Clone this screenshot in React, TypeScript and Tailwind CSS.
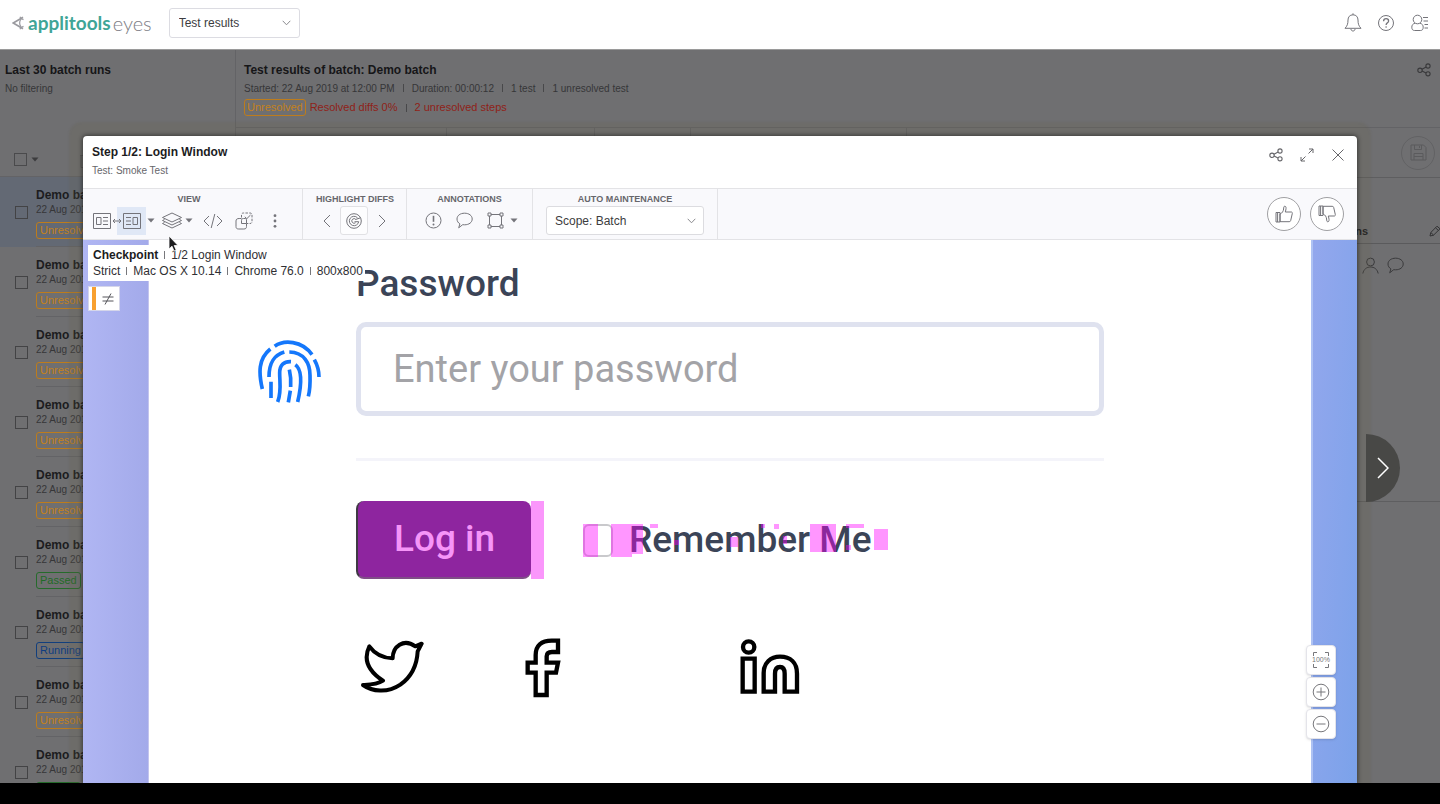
import type { ReactNode } from 'react'

type Status = 'Unresolved' | 'Passed' | 'Running'

const runs: Status[] = [
  'Unresolved',
  'Unresolved',
  'Unresolved',
  'Unresolved',
  'Unresolved',
  'Passed',
  'Running',
  'Unresolved',
  'Passed',
]

const statusStyle: Record<Status, string> = {
  Unresolved: 'border-[#bd7c1c] text-[#c4811c]',
  Passed: 'border-[#256b2b] text-[#1f6b27]',
  Running: 'border-[#123f7d] text-[#0f3d80]',
}

type IconProps = { w: number; h: number; className?: string; children: ReactNode; sw?: number; box?: string }

function Icon({ w, h, className = '', children, sw = 1, box }: IconProps) {
  return (
    <svg
      width={w}
      height={h}
      viewBox={box ?? `0 0 ${w} ${h}`}
      fill="none"
      stroke="currentColor"
      strokeWidth={sw}
      className={`block shrink-0 ${className}`}
      aria-hidden="true"
    >
      {children}
    </svg>
  )
}

const Caret = () => (
  <Icon w={8} h={5}>
    <path d="M.5 .5h7L4 4.5z" fill="currentColor" stroke="none" />
  </Icon>
)

const ChevronDown = ({ className = '' }: { className?: string }) => (
  <Icon w={9} h={6} className={className}>
    <path d="M.7 .8 4.5 4.8 8.3 .8" />
  </Icon>
)

const ShareIcon = () => (
  <Icon w={14} h={14} sw={1.1}>
    <circle cx="3" cy="7.3" r="2.2" />
    <circle cx="11" cy="3" r="2.1" />
    <circle cx="11" cy="10.8" r="2.1" />
    <path d="M5 6.2 9.1 4M5.1 8.1l3.9 1.8" />
  </Icon>
)

const BubbleIcon = () => (
  <Icon w={17} h={17}>
    <path d="M8.600 1.200C4.200 1.200 1 3.600 1 7c0 2.200 1.200 3.900 2.900 4.900L2.700 15.800l4-3.100c.6.1 1.200.1 1.900.1 4.400 0 7.600-2.400 7.600-5.800S13 1.200 8.600 1.200z" />
  </Icon>
)

const ThumbIcon = ({ down = false }: { down?: boolean }) => (
  <Icon w={18} h={18} className={down ? '-scale-y-100' : ''}>
    <path d="M1 7.500h4v9.500H1zM2.600 7.500V17M5 9c2.300-.8 3.400-3 3.600-5 .1-1.600.2-2.800 1.200-2.800 1.300 0 1.500 1.800 1 3.800L10.300 7h6c.8 0 1.200.7 1 1.500l-1.600 7c-.2.800-.7 1.200-1.500 1.200H5z" />
  </Icon>
)

function AppHeader() {
  return (
    <header className="flex h-[50px] shrink-0 items-center border-b border-[#9a9a9a] bg-white pr-[11px] pb-1 pl-3">
      <a href="#home" className="flex items-center font-['Lato',sans-serif] leading-6" aria-label="Applitools Eyes">
        <Icon w={13} h={14} sw={1.5} className="mr-[3px] text-[#9b9ba0]">
          <path d="M11 1.200 1.200 7 11 12.800" strokeWidth="1.800" />
          <path d="M8 .8 9 3C7.500 5.200 7.500 8.800 9 11L8 13.200M11.500 3.600 9.600 2.800M11.500 10.400l-1.900.8" strokeWidth="1.200" />
        </Icon>
        <span className="text-[19px] font-bold text-[#3fa597]">applitools</span>
        <span className="ml-0.5 text-[20px] font-light text-[#7d7d84]">eyes</span>
      </a>
      <div className="relative ml-[17px] w-[131px]">
        <select
          aria-label="Page"
          className="h-[30px] w-full appearance-none rounded-[3px] border border-[#dcdce2] bg-white px-[9px] text-xs text-[#3c3c40]"
        >
          <option>Test results</option>
        </select>
        <ChevronDown className="pointer-events-none absolute top-3 right-[9px] text-[#8a8a8e]" />
      </div>
      <nav className="ml-auto flex items-center gap-[15px] text-[#74747a]">
        <button type="button" aria-label="Notifications">
          <Icon w={18} h={19}>
            <path d="M9 1.800c-3.300 0-5 2.300-5 5.200 0 4-.8 6-3 8.300h16c-2.200-2.300-3-4.300-3-8.300 0-2.900-1.700-5.200-5-5.200zM9 .3v1.500M6.900 16c.3 1.400 1 2 2.100 2s1.800-.6 2.100-2" />
          </Icon>
        </button>
        <button type="button" aria-label="Help">
          <Icon w={18} h={18}>
            <circle cx="9" cy="9" r="7.500" />
            <path d="M6.600 7.200c0-1.600 1-2.500 2.500-2.500s2.500.9 2.500 2.200c0 1.900-2.500 2-2.500 4.200" strokeWidth="1.300" />
            <circle cx="9.100" cy="13" r=".8" fill="currentColor" stroke="none" />
          </Icon>
        </button>
        <button type="button" aria-label="Account">
          <Icon w={19} h={18}>
            <circle cx="7.500" cy="5.500" r="4.300" />
            <path d="M5 9.200c-2.200.6-3.200 2-3.200 4 0 2.300 1 3.300 2.800 3.300h5.800c1.800 0 2.800-1 2.800-3.300 0-2-1-3.400-3.200-4M13 3.500h5M13.500 7h4.500M14.500 10.500h3.500M14.500 14h3.500" />
          </Icon>
        </button>
      </nav>
    </header>
  )
}

function Sidebar() {
  return (
    <aside className="flex w-[236px] shrink-0 flex-col border-r border-[#636366]">
      <div className="h-[77px] px-[5px] pt-[11px]">
        <h2 className="text-xs leading-[18px] font-bold text-[#161618]">Last 30 batch runs</h2>
        <p className="text-[10px] leading-5 text-[#363638]">No filtering</p>
      </div>
      <div className="flex h-[50px] items-center border-b border-[#636366] pt-4 pl-[14px] text-[#3c3c3e]">
        <input
          type="checkbox"
          aria-label="Select all batches"
          className="size-[13px] appearance-none border border-[#4a4a4c]"
        />
        <button type="button" aria-label="Selection options" className="ml-1">
          <Caret />
        </button>
        <button type="button" aria-label="Delete batches" className="ml-10 text-[#59595b]">
          <Icon w={14} h={16}>
            <path d="M1 3.500h12M2 3.500v12h10v-12M5 3.500v-2h4v2" />
          </Icon>
        </button>
      </div>
      <ul className="min-h-0 flex-1 overflow-hidden">
        {runs.map((status, i) => (
          <li key={i} className={i === 0 ? 'flex h-[70px] bg-[#636974] pl-[15px]' : 'flex h-[70px] pl-[15px]'}>
            <input
              type="checkbox"
              aria-label={`Select run ${i + 1}`}
              className="mt-[29px] size-[13px] shrink-0 appearance-none border border-[#434345]"
            />
            <div className="ml-2 flex-1 overflow-hidden border-b border-[#636366] pt-2.5 whitespace-nowrap">
              <p className="text-xs leading-4 font-bold text-[#1c1c1e]">Demo batch</p>
              <p className="text-[10px] leading-[14px] text-[#363638]">22 Aug 2019 at 12:00 PM</p>
              <p className="mt-[5px] flex text-[11px] leading-[15px]">
                <span className={`rounded-[3px] border px-[3px] ${statusStyle[status]}`}>{status}</span>
                <span className="ml-1 pt-px text-[#8f2218]">Resolved diffs 0%</span>
              </p>
            </div>
          </li>
        ))}
      </ul>
    </aside>
  )
}

const Bar = () => <span className="mx-2 inline-block h-2 w-px bg-[#48484a]" />

function BatchDetails() {
  return (
    <section className="flex min-w-0 flex-1 flex-col">
      <div className="flex h-[78px] justify-between border-b border-[#636366] pt-[11px] pr-[9px] pl-2">
        <div>
          <h1 className="text-xs leading-[18px] font-bold text-[#161618]">Test results of batch: Demo batch</h1>
          <p className="text-[10px] leading-5 text-[#363638]">
            Started: 22 Aug 2019 at 12:00 PM
            <Bar />
            Duration: 00:00:12
            <Bar />1 test
            <Bar />1 unresolved test
          </p>
          <p className="flex items-center text-[11px] leading-[15px] text-[#8f2218]">
            <span className="mr-1 rounded-[3px] border border-[#bd7c1c] px-0.5 text-[#c4811c]">Unresolved</span>
            Resolved diffs 0%
            <Bar />2 unresolved steps
          </p>
        </div>
        <button type="button" aria-label="Share batch" className="self-start pt-0.5 text-[#39393b]">
          <ShareIcon />
        </button>
      </div>
      <div className="flex h-[50px] items-center border-b border-[#5e5e60] text-[#5b5b5d]">
        <div className="h-full w-[211px] border-r border-[#636366]" />
        <div className="h-full w-[148px] border-r border-[#636366]" />
        <div className="h-full w-24 border-r border-[#636366]" />
        <div className="h-full w-[216px] border-r border-[#636366]" />
        <button
          type="button"
          aria-label="Save"
          className="mr-[5px] ml-auto flex size-[34px] items-center justify-center rounded-full border border-[#626264]"
        >
          <Icon w={17} h={17}>
            <path d="M1 1h12.500L16 3.500V16H1zM4.500 1v4.500h7V1M9.500 2v2M4 16V9.500h9V16M4 12.500h9" />
          </Icon>
        </button>
      </div>
      <div className="flex h-[66px] items-end justify-end border-b border-[#5a5a5c] pb-1">
        <span className="mr-[61px] text-[11px] leading-4 font-bold text-[#1c1c1e]">ns</span>
        <button type="button" aria-label="Edit" className="pb-0.5 text-[#333335]">
          <Icon w={11} h={13}>
            <path d="M1 12l.8-3.500L8 2.200l3 2.600-6.500 6.400zM2 8.700l2.600 2.400M6.500 3.800l3 2.700" />
          </Icon>
        </button>
      </div>
      <div className="flex h-[258px] items-start justify-end gap-2 border-b border-[#5e5e60] pt-[13px] pr-9 text-[#3a3a3c]">
        <button type="button" aria-label="Assign">
          <Icon w={17} h={17}>
            <circle cx="8.500" cy="5" r="3.900" />
            <path d="M.8 16.500c1-4.500 4-6.500 7.700-6.500s6.700 2 7.700 6.500" />
          </Icon>
        </button>
        <button type="button" aria-label="Comments">
          <BubbleIcon />
        </button>
      </div>
    </section>
  )
}

function ToolGroup({ title, className, children }: { title: string; className: string; children: ReactNode }) {
  return (
    <div role="group" aria-label={title} className={`border-r border-[#e3e3e6] pt-1 ${className}`}>
      <p className="text-center text-[9px] leading-[13px] font-bold whitespace-nowrap text-[#66666b] uppercase">{title}</p>
      <div className="flex h-[29px] items-center">{children}</div>
    </div>
  )
}

function Toolbar() {
  return (
    <div className="flex h-[52px] shrink-0 border-y border-[#e3e3e6] bg-[#f9f9fc] text-[#74747a]">
      <ToolGroup title="View" className="w-[220px] pr-4 pl-[9px]">
        <button type="button" aria-label="Switch between baseline and checkpoint">
          <Icon w={54} h={28}>
            <rect x="25" y="0" width="29" height="28" fill="#e0e8f6" stroke="none" />
            <path d="M1.500 6.500h17v15h-17zM4.500 10.500h4.500v7H4.500zM11 10.500h5M11 14h5M11 17.500h5" />
            <path d="M31.500 6.500h17v15h-17zM41 10.500h4.500v7H41zM34 10.500h5M34 14h5M34 17.500h5" />
            <path d="M21 14h8M23 12l-2 2 2 2M27 12l2 2-2 2" />
          </Icon>
        </button>
        <button type="button" aria-label="View options" className="ml-px">
          <Caret />
        </button>
        <button type="button" aria-label="Layers" className="ml-1.5">
          <Icon w={22} h={17}>
            <path d="M11 1 1.500 5.500 11 10l9.500-4.500zM3.500 7.500l-2 1L11 13l9.500-4.500-2-1M3.500 10.500l-2 1L11 16l9.500-4.500-2-1" />
          </Icon>
        </button>
        <button type="button" aria-label="Layer options" className="ml-0.5">
          <Caret />
        </button>
        <button type="button" aria-label="Show DOM" className="ml-2.5">
          <Icon w={20} h={16}>
            <path d="M6 3 1 8l5 5M14 3l5 5-5 5M11.800 1 8.200 15" />
          </Icon>
        </button>
        <button type="button" aria-label="Group matching" className="ml-3">
          <Icon w={18} h={18}>
            <path d="M6.500 6.500H4.200C2 6.500 1 7.300 1 9v5.500C1 16.500 2 17 3.800 17h5c2 0 2.700-.8 2.700-2.500v-3" />
            <path d="M6.500 11.500v-3c0-1.500.7-2 2-2h1.500c1 0 1.500.5 1.500 1.500v3.500z" />
            <path d="M6.500 5.500V3c0-1.300.7-2 2-2H15c1.300 0 2 .7 2 2v6.500c0 1.300-.7 2-2 2h-3" strokeDasharray="2.500 1.300" />
            <path d="M9.800 4.800l2 1.900L15.500 3" />
          </Icon>
        </button>
        <button type="button" aria-label="More" className="ml-5">
          <Icon w={4} h={14}>
            <g fill="currentColor" stroke="none">
              <circle cx="2" cy="1.700" r="1.400" />
              <circle cx="2" cy="7" r="1.400" />
              <circle cx="2" cy="12.300" r="1.400" />
            </g>
          </Icon>
        </button>
      </ToolGroup>
      <ToolGroup title="Highlight diffs" className="w-[104px] px-[13px]">
        <button type="button" aria-label="Previous diff" className="ml-1">
          <Icon w={12} h={14}>
            <path d="M10 1 4 7l6 6" />
          </Icon>
        </button>
        <button
          type="button"
          aria-label="Highlight differences"
          className="ml-2 flex h-[29px] w-7 items-center justify-center rounded-[3px] border border-[#e1e1e4] bg-[#fdfdfe]"
        >
          <Icon w={16} h={16}>
            <circle cx="8" cy="8" r="7.300" />
            <path d="M11.500 4.800a4.700 4.700 0 1 0 1.200 3.900H8.500" />
            <path d="M9.800 6.400a2.300 2.300 0 1 0-.2 3.300M9.500 6.500l5-1.700" />
          </Icon>
        </button>
        <button type="button" aria-label="Next diff" className="ml-2">
          <Icon w={12} h={14}>
            <path d="M3 1l6 6-6 6" />
          </Icon>
        </button>
      </ToolGroup>
      <ToolGroup title="Annotations" className="w-[126px]">
        <button type="button" aria-label="Report issue" className="ml-[18px]">
          <Icon w={17} h={17}>
            <circle cx="8.500" cy="8.500" r="7.500" />
            <path d="M8.500 3.800v6" strokeWidth="1.600" />
            <circle cx="8.500" cy="12.500" r="1" fill="currentColor" stroke="none" />
          </Icon>
        </button>
        <button type="button" aria-label="Add remark" className="ml-3.5">
          <BubbleIcon />
        </button>
        <button type="button" aria-label="Add region" className="ml-3.5">
          <Icon w={17} h={17}>
            <path d="M4 2.500h9M4 14.500h9M2.500 4v9M14.500 4v9" />
            <path d="M1 1h3v3H1zM13 1h3v3h-3zM1 13h3v3H1zM13 13h3v3h-3z" />
          </Icon>
        </button>
        <button type="button" aria-label="Region options" className="ml-1.5">
          <Caret />
        </button>
      </ToolGroup>
      <ToolGroup title="Auto maintenance" className="w-[185px] px-[13px]">
        <div className="relative w-full">
          <select
            aria-label="Scope"
            className="block h-[29px] w-full appearance-none rounded-[3px] border border-[#dcdce0] bg-white px-2 text-xs text-[#3c3c40]"
          >
            <option>Scope: Batch</option>
          </select>
          <ChevronDown className="pointer-events-none absolute top-3 right-2 text-[#8a8a8e]" />
        </div>
      </ToolGroup>
      <div className="ml-auto flex items-center gap-[9px] pr-[13px]">
        <button
          type="button"
          aria-label="Accept"
          className="flex size-[34px] items-center justify-center rounded-full border border-[#a0a0a3] bg-white"
        >
          <ThumbIcon />
        </button>
        <button
          type="button"
          aria-label="Reject"
          className="flex size-[34px] items-center justify-center rounded-full border border-[#a0a0a3] bg-white"
        >
          <ThumbIcon down />
        </button>
      </div>
    </div>
  )
}

/* Changed regions over the "Remember Me" label: x, y, width, height */
const diffRegions = [
  [0, 0, 15, 33],
  [28, 0, 21, 33],
  [49, 0, 11, 30],
  [67, 0, 8, 4],
  [91, 16, 5, 5],
  [147, 13, 8, 10],
  [178, 0, 4, 4],
  [191, 0, 5, 5],
  [200, 12, 4, 8],
  [227, 0, 26, 28],
  [263, 0, 18, 4],
  [263, 21, 5, 5],
  [291, 5, 14, 21],
]

const Separator = () => <span className="mx-1.5 inline-block h-2 w-px bg-[#77777b]" />

function Checkpoint() {
  return (
    <div className="relative flex min-h-0 flex-1 overflow-hidden bg-white">
      <div className="w-[66px] shrink-0 border-r border-[#c3c4ee] bg-linear-to-r from-[#b0b6f3] to-[#a3aaea]" />
      <div className="grid min-w-0 flex-1 grid-cols-[64px_1fr] content-start gap-x-[35px] pt-5 pr-[207px] pl-[108px] font-['Roboto',sans-serif] text-[37px] leading-[48px] text-[#3b4457]">
        <label htmlFor="password" className="col-start-2 font-medium">
          Password
        </label>
        <svg viewBox="50 58 192 192" className="mt-[31px] block size-16 text-[#1477fb]" fill="none" stroke="currentColor" strokeWidth="11" aria-hidden="true">
          <path d="M103 80C130 60 185 62 215 105M90 88C53 118 55 160 66 208M222 120c10 18 14 34 14 52" />
          <path d="M86 172c0-45 16-66 46-75M147 97c45 1 62 34 62 70 1 28 0 43-5 63M92 186v49" />
          <path d="M112 247c12-30 6-60 6-87 0-25 13-35 34-34M165 135c21 15 19 60 7 112" />
          <path d="M147 150c5 20 5 35 4 52M150 213l-6 35" />
        </svg>
        <input
          id="password"
          type="password"
          placeholder="Enter your password"
          className="mt-3.5 block h-[94px] w-full rounded-[10px] border-[5px] border-[#dfe2ef] bg-white px-8 text-[38px] placeholder:text-[#a3a3a7]"
        />
        <div className="col-start-2 mt-[42px] h-[3px] bg-[#f4f4fa]" />
        <div className="col-start-2 mt-10 flex items-center">
          <button
            type="button"
            className="relative h-[78px] w-[175px] rounded-[8px] border-b-2 border-l-2 border-b-[#7f4f86] border-l-[#3f3944] bg-[#8e259f] font-medium text-[#f695f8]"
          >
            Log in
          </button>
          <div className="-ml-1.5 h-[78px] w-[19px] bg-[linear-gradient(90deg,transparent_6px,#fa96fb_6px)]" />
          <div className="relative ml-[39px]">
            <label className="flex items-center gap-4 font-medium whitespace-nowrap">
              <input
                type="checkbox"
                className="h-[33px] w-[30px] shrink-0 appearance-none rounded-[6px] border-2 border-[#c9c9cc] bg-white"
              />
              Remember Me
            </label>
            <svg width="305" height="33" className="pointer-events-none absolute top-2 left-0" aria-hidden="true">
              {diffRegions.map(([x, y, w, h]) => (
                <rect key={`${x}-${y}`} x={x} y={y} width={w} height={h} fill="#ff00ff" fillOpacity=".41" />
              ))}
            </svg>
          </div>
        </div>
        <div className="col-start-2 mt-[59px] flex items-start text-black">
          <a href="#twitter" aria-label="Twitter" className="ml-1">
            <Icon w={64} h={60} box="59 55 192 180" sw={12}>
              <path d="M68 196C95 215 140 222 180 195C215 170 230 135 232 95L244 72L225 80C190 55 157 80 157 116C130 115 105 105 87 80C70 115 78 150 128 183C110 195 90 195 68 196z" strokeLinejoin="round" />
            </Icon>
          </a>
          <a href="#facebook" aria-label="Facebook" className="ml-[100px]">
            <Icon w={38} h={60} box="553 53 114 180" sw={13}>
              <path d="M655 61H636C605 61 588 76 588 104V127H564V157H588V224H621V157H649L655 127H621V108C621 98 627 95 637 95H655z" />
            </Icon>
          </a>
          <a href="#linkedin" aria-label="LinkedIn" className="ml-[177px]">
            <Icon w={62} h={60} box="1196 53 186 180" sw={13}>
              <circle cx="1225" cy="80" r="17" />
              <path d="M1207 115h36v99h-36zM1270 214V158C1270 127 1291 109 1319 109C1350 109 1370 127 1370 160V214H1333V160C1333 146 1328 140 1319 140C1309 140 1304 147 1304 160V214z" />
            </Icon>
          </a>
        </div>
      </div>
      <div className="w-[46px] shrink-0 border-l-2 border-[#aec2f3] bg-linear-to-br from-[#93a7ed] to-[#7ba2ea]" />

      <div className="absolute top-[5px] left-[5px] bg-white pt-0.5 pr-0.5 pb-0.5 pl-[5px] text-xs leading-4 whitespace-nowrap text-[#2f2f33]">
        <p>
          <strong className="text-[#1c1c1e]">Checkpoint</strong>
          <Separator />
          1/2 Login Window
        </p>
        <p>
          Strict
          <Separator />
          Mac OS X 10.14
          <Separator />
          Chrome 76.0
          <Separator />
          800x800
        </p>
      </div>
      <div className="absolute top-[46px] left-[5px] flex h-[25px] w-8 items-center border border-[#d5d6ea] bg-white pl-[3px] text-[#55555a]">
        <span className="h-full w-1 bg-[#f8a030]" />
        <Icon w={12} h={12} className="ml-1.5">
          <path d="M.5 4h11M.5 8h11M9 .5 3 11.500" />
        </Icon>
      </div>

      <div className="absolute right-[21px] bottom-11 flex flex-col gap-0.5 text-[#77777b]">
        <button type="button" aria-label="Actual size" className="relative flex size-[30px] items-center justify-center rounded-[4px] border border-[#e4e4ea] bg-white shadow">
          <Icon w={18} h={18}>
            <path d="M5 1.500H1.500V5M13 1.500h3.500V5M5 16.500H1.500V13M13 16.500h3.500V13" />
          </Icon>
          <span className="absolute inset-x-0 text-center text-[7px] leading-[8px]">100%</span>
        </button>
        <button type="button" aria-label="Zoom in" className="flex size-[30px] items-center justify-center rounded-[4px] border border-[#e4e4ea] bg-white shadow">
          <Icon w={18} h={18}>
            <circle cx="9" cy="9" r="7.800" />
            <path d="M4.500 9h9M9 4.500v9" />
          </Icon>
        </button>
        <button type="button" aria-label="Zoom out" className="flex size-[30px] items-center justify-center rounded-[4px] border border-[#e4e4ea] bg-white shadow">
          <Icon w={18} h={18}>
            <circle cx="9" cy="9" r="7.800" />
            <path d="M4.500 9h9" />
          </Icon>
        </button>
      </div>
    </div>
  )
}

function StepDialog() {
  return (
    <div
      role="dialog"
      aria-label="Step 1/2: Login Window"
      className="absolute inset-x-[83px] top-[86px] bottom-0 flex flex-col rounded-t-[4px] bg-white shadow-[0_0_4px_1px_rgba(0,0,0,0.45),0_0_2px_14px_rgba(100,96,70,0.18)]"
    >
      <div className="flex h-[52px] shrink-0 items-start justify-between pr-3 pl-[9px]">
        <div className="pt-[7px]">
          <h2 className="text-xs leading-[18px] font-bold text-[#1c1c1e]">Step 1/2: Login Window</h2>
          <p className="text-[10px] leading-5 text-[#66666a]">Test: Smoke Test</p>
        </div>
        <div className="flex items-center gap-[17px] pt-3 text-[#66666a]">
          <button type="button" aria-label="Share">
            <ShareIcon />
          </button>
          <button type="button" aria-label="Full screen">
            <Icon w={14} h={14}>
              <path d="M8.500 5.500 13 1M9 1h4v4M5.500 8.500 1 13M1 9v4h4" />
            </Icon>
          </button>
          <button type="button" aria-label="Close">
            <Icon w={14} h={14}>
              <path d="M1.500 1.500l11 11M12.500 1.500l-11 11" />
            </Icon>
          </button>
        </div>
      </div>
      <Toolbar />
      <Checkpoint />
      <svg width="12" height="18" viewBox="0 0 12 18" className="absolute top-[99px] left-[85px]" aria-hidden="true">
        <path d="M1 1v13l3-2.800L6 16l2.200-.9L6.200 10.500H10z" fill="#1c1c1e" stroke="#fff" strokeWidth=".8" />
      </svg>
    </div>
  )
}

export default function App() {
  return (
    <div className="flex h-screen flex-col overflow-hidden bg-black pb-[21px] font-['Liberation_Sans',Arial,sans-serif]">
      <AppHeader />
      <main className="relative flex min-h-0 flex-1 overflow-hidden bg-[#6f6f71]">
        <Sidebar />
        <BatchDetails />
        <StepDialog />
        <button
          type="button"
          aria-label="Next step"
          className="absolute top-[384px] right-10 flex h-[68px] w-[34px] items-center rounded-r-full bg-[#484846] pl-[11px] text-white"
        >
          <Icon w={12} h={22} sw={1.5}>
            <path d="M1 1l10 10L1 21" />
          </Icon>
        </button>
      </main>
    </div>
  )
}
